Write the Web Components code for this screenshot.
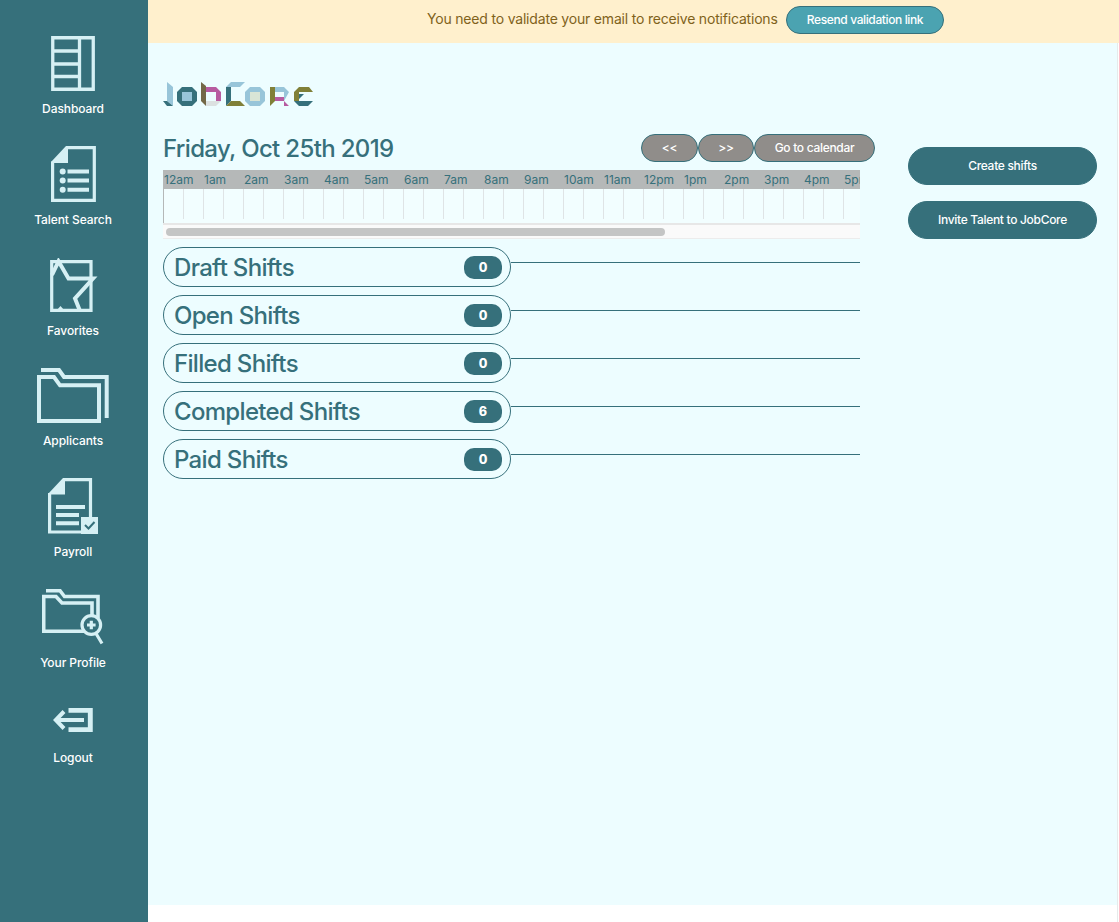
<!DOCTYPE html>
<html lang="en">
<head>
<meta charset="utf-8">
<title>JobCore</title>
<style>
html, body { margin: 0; height: 100%; background: #fff; }
body { font-family: Inter, "Liberation Sans", sans-serif; overflow: hidden; --teal: #36707b; --ice: #d6f0f4; color: var(--teal); }
</style>
</head>
<body>
<job-app></job-app>
<script>
const define = (name, html, setup) => customElements.define(name, class extends HTMLElement {
  connectedCallback() {
    if (this.shadowRoot) return;
    this.attachShadow({ mode: 'open' }).innerHTML = html;
    if (setup) setup(this, this.shadowRoot);
  }
});

const icons = {
  dashboard: ['44', '55', '<path d="M1.75 1.75h40.5v51.5H1.75zM28.5 1v53M2 15h26M2 28h26M2 40.500h26" fill="none" stroke="currentColor" stroke-width="3.3"/>'],
  search: ['45', '56', '<path d="M15.500 1.600H43.300V54.400H1.600V15.500" fill="none" stroke="currentColor" stroke-width="3.2"/><path d="M0 16L15 0H17V17H0z" fill="currentColor"/><path d="M16.500 25.500h21.500M16.500 34.500h21.500M16.500 43.800h21.500" stroke="currentColor" stroke-width="4"/><g fill="currentColor"><circle cx="11.700" cy="25.500" r="3"/><circle cx="11.700" cy="34.500" r="3"/><circle cx="11.700" cy="43.800" r="3"/></g>'],
  favorites: ['48', '55', '<path d="M1.700 3.700H41V52.300H1.700z" fill="none" stroke="currentColor" stroke-width="3.2"/><path d="M2 17L8.500 3.300L18.500 20.500H43L25 40.500L30 53" fill="none" stroke="currentColor" stroke-width="4"/><path d="M7 52l3.500-4 3.500 4z" fill="currentColor"/>'],
  applicants: ['72', '55', '<path d="M4 2H22L27 9H69.700V50" fill="none" stroke="currentColor" stroke-width="4"/><path d="M2 9H17L23 17.300H62V53H2z" fill="none" stroke="currentColor" stroke-width="4"/>'],
  payroll: ['50', '56', '<path d="M15 1.600H42.500V54H1.600V15" fill="none" stroke="currentColor" stroke-width="3.2"/><path d="M0 16L15 0H17V16.500H0zM33 39h17v17H33z" fill="currentColor"/><path d="M8 29h29M8 37h23M8 45.300h23" stroke="currentColor" stroke-width="4"/><path d="M37 47l3.500 3.500 6-6.500" fill="none" stroke="#36707b" stroke-width="2"/>'],
  profile: ['62', '56', '<path d="M4 1.700H18L22.500 7.500H56V29M42 42.300H1.700V7.500H14L20 14H50V28" fill="none" stroke="currentColor" stroke-width="3.600"/><circle cx="49.300" cy="36" r="9.300" fill="none" stroke="currentColor" stroke-width="3.200"/><path d="M45 36h8.600M49.300 31.700v8.600M54 44.500l6 10" fill="none" stroke="currentColor" stroke-width="3.200"/>'],
  logout: ['40', '24', '<path d="M15.500 2.400H37.300V21.600H15.500" fill="none" stroke="currentColor" stroke-width="4.900"/><path d="M31 12H3M11 3.500L2.800 12L11 20.500" fill="none" stroke="currentColor" stroke-width="4"/>']
};

define('nav-item', `<style>
:host { display: flex; flex-direction: column; align-items: center; height: var(--h); width: 146px; box-sizing: border-box; }
.art { display: flex; color: var(--ice); margin-left: var(--shift, 0); }
svg { display: block; }
.label { margin-top: 9px; font-size: 12px; line-height: 18px; font-weight: 550; color: #fff; letter-spacing: var(--ls, -.08px); white-space: nowrap; }
:host([icon=logout]) .label { margin-top: 17px; }
</style><div class="art"></div><div class="label"><slot></slot></div>`, (el, root) => {
  const [w, h, body] = icons[el.getAttribute('icon')];
  root.querySelector('.art').innerHTML = `<svg width="${w}" height="${h}" viewBox="0 0 ${w} ${h}">${body}</svg>`;
});

define('side-nav', `<style>
:host { display: flex; flex-direction: column; width: 148px; flex: none; background: var(--teal); padding-top: 36px; box-sizing: border-box; }
</style>
<nav-item icon="dashboard" style="--h:110px">Dashboard</nav-item>
<nav-item icon="search" style="--h:112px;--shift:1px">Talent Search</nav-item>
<nav-item icon="favorites" style="--h:110px;--shift:2px">Favorites</nav-item>
<nav-item icon="applicants" style="--h:110px">Applicants</nav-item>
<nav-item icon="payroll" style="--h:111px">Payroll</nav-item>
<nav-item icon="profile" style="--h:119px">Your Profile</nav-item>
<nav-item icon="logout" style="--h:80px">Logout</nav-item>`);

define('pill-button', `<style>
:host { display: flex; align-items: center; justify-content: center; box-sizing: border-box; width: var(--w); height: 28px; padding-bottom: 1px; border-radius: 19px; border: 1px solid var(--teal); background: #908d8a; color: #fff; font-size: 12px; font-weight: 550; letter-spacing: var(--ls, -.3px); white-space: nowrap; }
:host([kind=info]) { background: #4ba3b1; letter-spacing: -.38px; }
:host([kind=primary]) { background: var(--teal); height: 38px; padding-bottom: 2px; font-weight: 500; letter-spacing: -.31px; }
</style><slot></slot>`);

define('notice-bar', `<style>
:host { display: flex; align-items: flex-start; height: 43px; box-sizing: border-box; background: #fff0cd; padding: 6px 0 0 279px; color: #80621b; font-size: 14px; }
span { width: 359px; line-height: 26px; white-space: nowrap; letter-spacing: var(--ls, -.19px); }
</style><span><slot></slot></span><pill-button kind="info" style="--w:158px">Resend validation link</pill-button>`);

define('brand-logo', `<style>:host { display: block; height: 26px; } svg { display: block; }</style>
<svg width="152" height="26" viewBox="0 0 152 26"><g transform="translate(0 1)">
<path d="M4 0L10 5V24L4 19z" fill="#98c5d9"/><path d="M0 19H4L10 24H4z" fill="#36707b"/>
<path d="M19 5H29L34 10V19L29 24H19L14 19V10z" fill="#36707b"/><path d="M19 10H29V19H19z" fill="#98c5d9"/>
<path d="M38 0L43 4V24L38 19z" fill="#736847"/><path d="M43 5H53L58 10H43zM53 10H58V19H53z" fill="#b75ba0"/><path d="M43 19H58L53 24H43z" fill="#dce1e1"/>
<path d="M63 5L68 0H82L77 5z" fill="#98c5d9"/><path d="M63 5H68V19L63 24z" fill="#36707b"/><path d="M68 19H77L82 24H63z" fill="#808038"/>
<path d="M87 5H97L102 10V19L97 24H87L82 19V10z" fill="#98c5d9"/><path d="M87 10H97V19H87z" fill="#d9e5d6"/>
<path d="M107 5H112V19L107 24z" fill="#808038"/><path d="M112 5H121L126 10L121 15V10H112zM121 10H126L121 19z" fill="#98c5d9"/><path d="M112 15H121V19H112zM121 19L126 24H121z" fill="#b75ba0"/>
<path d="M131 10L136 5H146L150 10H136V19H131z" fill="#808038"/><path d="M136 12H141L136 17zM131 19H150L145 24H136z" fill="#36707b"/></g>
</svg>`);

define('day-header', `<style>
:host { display: flex; align-items: center; width: 712px; height: 28px; }
h2 { margin: 0; flex: 1; font-size: 24px; line-height: 28px; padding-top: 2px; font-weight: 500; letter-spacing: var(--ls, -.66px); white-space: nowrap; }
</style><h2><slot></slot></h2>
<pill-button style="--w:57px">&lt;&lt;</pill-button><pill-button style="--w:56px">&gt;&gt;</pill-button><pill-button style="--w:121px">Go to calendar</pill-button>`);

define('time-line', `<style>
:host { display: block; width: 697px; height: 69px; margin-top: 8px; overflow: hidden; }
.hours { display: flex; background: #b5b8b8; height: 19px; }
.hours span { flex: none; width: 39px; padding-left: 1px; font-size: 12px; line-height: 20px; white-space: nowrap; }
.grid { height: 34px; background: #f2feff; box-sizing: border-box; border-left: 1px solid #b5b8b8; display: flex; overflow: hidden; }
.grid i { flex: none; width: 20px; height: 30px; box-sizing: border-box; border-right: 1px solid #dfe4e6; }
.scroll { height: 16px; box-sizing: border-box; border-top: 2px solid #e7e7e7; border-bottom: 1px solid #ececec; background: #fafafa; display: flex; padding: 3px; }
.scroll b { width: 499px; height: 8px; border-radius: 4px; background: #c4c5c5; }
</style><div class="hours"></div><div class="grid"></div><div class="scroll"><b></b></div>`, (el, root) => {
  const hours = root.querySelector('.hours');
  for (let h = 0; h < 18; h++) {
    const s = document.createElement('span');
    s.textContent = (h % 12 || 12) + (h < 12 ? 'am' : 'pm');
    hours.append(s);
  }
  root.querySelector('.grid').innerHTML = '<i></i>'.repeat(36);
});

define('shift-row', `<style>
:host { display: flex; height: 40px; width: 697px; }
.pill { width: 348px; height: 40px; box-sizing: border-box; border: 1px solid var(--teal); border-radius: 20px; display: flex; align-items: center; justify-content: space-between; padding: 0 8px 0 10px; }
.name { font-size: 24px; line-height: 38px; padding-top: 2px; font-weight: 500; letter-spacing: var(--ls, -.68px); white-space: nowrap; }
.count { width: 38px; height: 23px; border-radius: 10px; background: var(--teal); color: #fff; font-size: 12.5px; line-height: 23px; font-weight: 800; text-align: center; }
hr { flex: 1; margin: 15px 0 0; border: 0; height: 1px; background: var(--teal); }
</style><div class="pill"><span class="name"><slot></slot></span><span class="count"></span></div><hr>`,
(el, root) => root.querySelector('.count').textContent = el.getAttribute('count'));

define('job-app', `<style>
:host { display: flex; width: 1119px; height: 922px; }
main { flex: 1; display: flex; flex-direction: column; }
.page { height: 862px; background: #edfdff; display: flex; width: 969px; box-sizing: border-box; padding: 38px 0 0 15px; }
.left { width: 712px; display: flex; flex-direction: column; }
day-header { margin-top: 27px; }
.rows { display: flex; flex-direction: column; gap: 8px; margin-top: 8px; }
.actions { margin-left: 33px; margin-top: 66px; display: flex; flex-direction: column; gap: 16px; }
.edge { flex: none; width: 1px; margin-left: -2px; margin-right: 1px; margin-top: 43px; background: #e6eaea; }
</style>
<side-nav></side-nav>
<main>
<notice-bar>You need to validate your email to receive notifications</notice-bar>
<div class="page">
<div class="left">
<brand-logo></brand-logo>
<day-header>Friday, Oct 25th 2019</day-header>
<time-line></time-line>
<div class="rows">
<shift-row count="0">Draft Shifts</shift-row>
<shift-row count="0">Open Shifts</shift-row>
<shift-row count="0">Filled Shifts</shift-row>
<shift-row count="6">Completed Shifts</shift-row>
<shift-row count="0">Paid Shifts</shift-row>
</div>
</div>
<div class="actions">
<pill-button kind="primary" style="--w:189px">Create shifts</pill-button>
<pill-button kind="primary" style="--w:189px">Invite Talent to JobCore</pill-button>
</div>
</div>
</main>
<div class="edge"></div>`);
</script>
</body>
</html>
